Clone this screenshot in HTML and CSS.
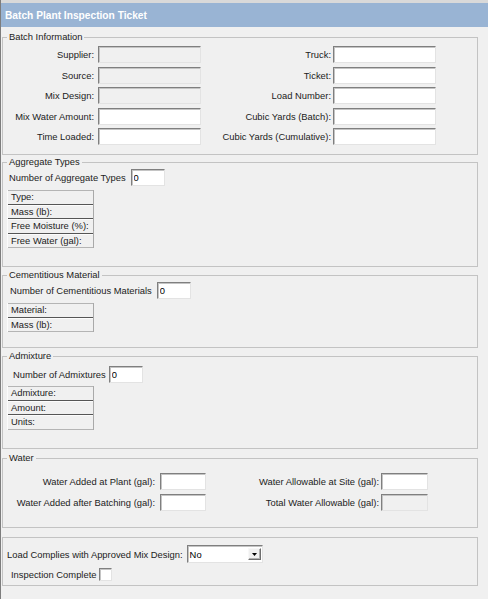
FILE: index.html
```html
<!DOCTYPE html>
<html lang="en">
<head>
<meta charset="utf-8">
<title>Batch Plant Inspection Ticket</title>
<link rel="stylesheet" href="styles.css">
</head>
<body>
<div class="page">
  <div class="titlebar">Batch Plant Inspection Ticket</div>
  <div class="content">
    <fieldset class="box box-batch">
      <legend>Batch Information</legend>
      <div class="batch-grid">
        <span class="lbl">Supplier:</span><input class="field is-disabled" type="text" disabled>
        <span class="lbl lbl-right">Truck:</span><input class="field" type="text">
        <span class="lbl">Source:</span><input class="field is-disabled" type="text" disabled>
        <span class="lbl lbl-right">Ticket:</span><input class="field" type="text">
        <span class="lbl">Mix Design:</span><input class="field is-disabled" type="text" disabled>
        <span class="lbl lbl-right">Load Number:</span><input class="field" type="text">
        <span class="lbl">Mix Water Amount:</span><input class="field" type="text">
        <span class="lbl lbl-right">Cubic Yards (Batch):</span><input class="field" type="text">
        <span class="lbl">Time Loaded:</span><input class="field" type="text">
        <span class="lbl lbl-right">Cubic Yards (Cumulative):</span><input class="field" type="text">
      </div>
    </fieldset>

    <fieldset class="box box-agg">
      <legend>Aggregate Types</legend>
      <div class="count-row count-agg">
        <span>Number of Aggregate Types</span><input class="field count-input" type="text" value="0">
      </div>
      <div class="grid-table">
        <div class="cell">Type:</div>
        <div class="cell">Mass (lb):</div>
        <div class="cell">Free Moisture (%):</div>
        <div class="cell">Free Water (gal):</div>
      </div>
    </fieldset>

    <fieldset class="box box-cem">
      <legend>Cementitious Material</legend>
      <div class="count-row count-cem">
        <span>Number of Cementitious Materials</span><input class="field count-input" type="text" value="0">
      </div>
      <div class="grid-table">
        <div class="cell">Material:</div>
        <div class="cell">Mass (lb):</div>
      </div>
    </fieldset>

    <fieldset class="box box-adm">
      <legend>Admixture</legend>
      <div class="count-row count-adm">
        <span>Number of Admixtures</span><input class="field count-input" type="text" value="0">
      </div>
      <div class="grid-table grid-table-adm">
        <div class="cell">Admixture:</div>
        <div class="cell">Amount:</div>
        <div class="cell">Units:</div>
      </div>
    </fieldset>

    <fieldset class="box box-water">
      <legend>Water</legend>
      <div class="water-grid">
        <span class="lbl">Water Added at Plant (gal):</span><input class="field" type="text">
        <span class="lbl lbl-right">Water Allowable at Site (gal):</span><input class="field" type="text">
        <span class="lbl">Water Added after Batching (gal):</span><input class="field" type="text">
        <span class="lbl lbl-right">Total Water Allowable (gal):</span><input class="field is-disabled" type="text" disabled>
      </div>
    </fieldset>

    <fieldset class="box box-final">
      <div class="select-row">
        <span>Load Complies with Approved Mix Design:</span>
        <div class="select">
          <span class="select-value">No</span>
          <span class="select-btn"><svg width="5" height="3" viewBox="0 0 5 3"><path d="M0 0H5L2.5 3Z" fill="#000"/></svg></span>
        </div>
      </div>
      <div class="check-row">
        <span>Inspection Complete</span><span class="checkbox"></span>
      </div>
    </fieldset>
  </div>
</div>
</body>
</html>
```
FILE: styles.css
```css
html, body {
  margin: 0;
  padding: 0;
}

body {
  background: #f0f0f0;
  font-family: "Liberation Sans", Arial, sans-serif;
  font-size: 9.4px;
  color: #222;
}

.page {
  border-left: 1px solid #7d7d7d;
  min-height: 100vh;
  box-sizing: border-box;
}

.titlebar {
  border-top: 3px solid #d9d9d9;
  height: 24px;
  background: #99b4d4;
  color: #fff;
  font-weight: bold;
  font-size: 10.2px;
  display: flex;
  align-items: center;
  padding-left: 4px;
}

.content {
  padding: 4px 0 0 1px;
}

.box {
  margin: 0;
  width: 476px;
  min-width: 0;
  box-sizing: border-box;
  border: 1px solid #c3c3c3;
  padding: 0 0 0 4px;
}

.box legend {
  padding: 0 2px;
  line-height: 12px;
  height: 12px;
}

.box-batch { padding-top: 3px; padding-bottom: 9px; }
.box-agg { margin-top: 1px; padding-top: 1px; padding-bottom: 18px; }
.box-cem { margin-top: 2px; padding-top: 1px; padding-bottom: 15px; }
.box-adm { margin-top: 2px; padding-top: 4px; padding-bottom: 18px; }
.box-water { margin-top: 3.5px; padding-top: 9px; padding-bottom: 16px; }
.box-final { margin-top: 9px; padding-top: 7px; padding-bottom: 4px; }

.field {
  box-sizing: border-box;
  width: 100%;
  height: 17px;
  margin: 0;
  padding: 0 2px;
  font: inherit;
  color: #000;
  background: #fff;
  border: 1px solid;
  border-color: #7f7f7f #e3e3e3 #e3e3e3 #7f7f7f;
  box-shadow: inset 1px 1px 0 #c4c4c4;
  outline: none;
}

.field.is-disabled {
  background: #f0f0f0;
}

.batch-grid {
  display: grid;
  grid-template-columns: 91px 103px 132px 103px;
  grid-auto-rows: 17px;
  row-gap: 3.5px;
  align-items: center;
}

.water-grid {
  display: grid;
  grid-template-columns: 153px 46px 175px 47px;
  grid-auto-rows: 17px;
  row-gap: 4px;
  align-items: center;
}

.lbl {
  text-align: right;
  padding-right: 4px;
  white-space: nowrap;
}

.water-grid .lbl {
  padding-right: 5px;
}

.batch-grid .lbl-right,
.water-grid .lbl-right {
  padding-right: 2px;
}

.count-row {
  display: flex;
  align-items: center;
  height: 17px;
  gap: 5px;
}

.count-agg { margin-left: 2px; }
.count-cem { margin-left: 3px; }
.count-adm { margin-left: 6px; gap: 3px; }

.count-input {
  width: 34px;
}

.grid-table {
  width: 87px;
  box-sizing: border-box;
  margin-top: 4px;
  border-left: 1px solid #fbfbfb;
  border-right: 1px solid #a9a9a9;
}

.grid-table-adm {
  margin-top: 3px;
}

.cell {
  height: 12.5px;
  line-height: 12.5px;
  padding-left: 3px;
  border-top: 1px solid #fcfcfc;
  border-bottom: 1px solid #555;
  white-space: nowrap;
}

.cell:first-child {
  border-top-color: #b4b4b4;
}

.cell:last-child {
  border-bottom-color: #b4b4b4;
}

.select-row {
  display: flex;
  align-items: center;
  gap: 4px;
}

.select {
  box-sizing: border-box;
  width: 76px;
  height: 18px;
  display: flex;
  align-items: center;
  justify-content: space-between;
  padding: 0 1px 0 2px;
  background: #fff;
  border: 1px solid;
  border-color: #7f7f7f #e3e3e3 #e3e3e3 #7f7f7f;
  box-shadow: inset 1px 1px 0 #c4c4c4;
}

.select-value {
  color: #000;
  padding-top: 1px;
}

.select-btn {
  box-sizing: border-box;
  width: 13px;
  height: 12px;
  display: flex;
  align-items: center;
  justify-content: center;
  background: #f0f0f0;
  border: 1px solid;
  border-color: #f8f8f8 #6e6e6e #6e6e6e #f8f8f8;
  box-shadow: inset -1px -1px 0 #b0b0b0;
}

.check-row {
  display: flex;
  align-items: center;
  gap: 3px;
  margin-top: 5px;
  margin-left: 4px;
  height: 13px;
}

.checkbox {
  box-sizing: border-box;
  width: 13px;
  height: 13px;
  background: #fff;
  border: 1px solid;
  border-color: #7f7f7f #e3e3e3 #e3e3e3 #7f7f7f;
  box-shadow: inset 1px 1px 0 #c4c4c4;
}
```
